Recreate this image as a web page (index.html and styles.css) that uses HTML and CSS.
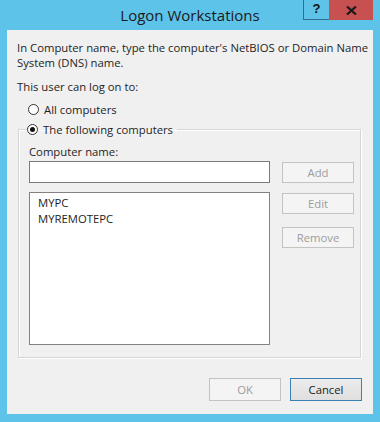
FILE: index.html
```html
<!DOCTYPE html>
<html lang="en">
<head>
    <meta charset="UTF-8">
    <title>Logon Workstations</title>
    <link rel="stylesheet" href="styles.css">
</head>
<body>
    <div class="window">
        <div class="titlebar">
            <div></div>
            <div class="title">Logon Workstations</div>
            <div class="caption-buttons">
                <span class="cap-help">?</span>
                <span class="cap-close">
                    <svg width="11" height="9" viewBox="0 0 11 9"><path d="M1 0.5 L10 8.5 M10 0.5 L1 8.5" stroke="#1a1a1a" stroke-width="2.2"/></svg>
                </span>
            </div>
        </div>
        <div class="client">
            <p class="intro">In Computer name, type the computer's NetBIOS or Domain Name<br>System (DNS) name.</p>
            <p class="label">This user can log on to:</p>
            <div class="radio-row"><span class="radio"></span>All computers</div>
            <fieldset class="group">
                <legend><span class="radio checked"></span>The following computers</legend>
                <div class="group-body">
                    <div class="fields">
                        <div class="field-label">Computer name:</div>
                        <div class="textbox"></div>
                        <div class="listbox">
                            <div>MYPC</div>
                            <div>MYREMOTEPC</div>
                        </div>
                    </div>
                    <div class="side-buttons">
                        <button class="btn disabled add">Add</button>
                        <button class="btn disabled">Edit</button>
                        <button class="btn disabled remove">Remove</button>
                    </div>
                </div>
            </fieldset>
            <div class="footer">
                <button class="btn disabled">OK</button>
                <button class="btn default">Cancel</button>
            </div>
        </div>
    </div>
</body>
</html>
```

FILE: styles.css
```css
body {
    margin: 0;
    background: #5ec3e9;
    font-family: "Open Sans", "Liberation Sans", sans-serif;
    font-size: 11.3px;
    color: #1e1e1e;
}
.window {
    width: 380px;
    height: 422px;
    overflow: hidden;
}
.titlebar {
    height: 30px;
    display: grid;
    grid-template-columns: 80px 1fr 80px;
}
.title {
    text-align: center;
    font-size: 15px;
    line-height: 30px;
    color: #1a1a1a;
}
.caption-buttons {
    display: flex;
    justify-content: flex-end;
    align-items: flex-start;
    padding-right: 7px;
}
.cap-help {
    width: 26px;
    height: 20px;
    border-left: 1px solid #2f6f8f;
    border-bottom: 1px solid #2f6f8f;
    box-sizing: border-box;
    text-align: center;
    font-family: "Liberation Sans", sans-serif;
    font-weight: bold;
    font-size: 13px;
    line-height: 18px;
    color: #111;
}
.cap-close {
    width: 44px;
    height: 20px;
    background: #c75050;
    display: flex;
    align-items: center;
    justify-content: center;
}
.client {
    margin: 0 7px;
    height: 384px;
    background: #f0f0f0;
    padding: 10px 0 0 10px;
    box-sizing: border-box;
    display: flex;
    flex-direction: column;
}
.intro {
    margin: 0;
    line-height: 15px;
    white-space: nowrap;
}
.label {
    margin: 9px 0 0 0;
    line-height: 15px;
}
.radio-row {
    margin: 8px 0 0 11px;
    display: flex;
    align-items: center;
    line-height: 15px;
}
.radio {
    width: 11px;
    height: 11px;
    border: 1px solid #333;
    border-radius: 50%;
    background: #fff;
    margin-right: 5px;
    box-sizing: border-box;
    position: relative;
}
.radio.checked::after {
    content: "";
    position: absolute;
    left: 2px;
    top: 2px;
    width: 5px;
    height: 5px;
    border-radius: 50%;
    background: #111;
}
.group {
    margin: 5px 0 0 1px;
    width: 343px;
    height: 236px;
    box-sizing: border-box;
    border: 1px solid #d5d5d5;
    box-shadow: inset 1px 1px 0 #fff, 1px 1px 0 #fff;
    padding: 0 0 0 10px;
}
.group legend {
    display: flex;
    align-items: center;
    padding: 0 4px 0 0;
    margin-left: -2px;
    line-height: 15px;
}
.group-body {
    display: flex;
    gap: 12px;
}
.field-label {
    margin-top: 7px;
    line-height: 15px;
}
.textbox {
    width: 241px;
    height: 22px;
    box-sizing: border-box;
    border: 1px solid #7a7a7a;
    background: #fff;
    margin-top: 2px;
}
.listbox {
    width: 241px;
    height: 153px;
    box-sizing: border-box;
    border: 1px solid #828282;
    background: #fff;
    margin-top: 9px;
    padding: 2px 0 0 8px;
    line-height: 16px;
}
.side-buttons {
    display: flex;
    flex-direction: column;
    padding-top: 25px;
}
.btn {
    width: 72px;
    height: 21px;
    font-family: inherit;
    font-size: 11.3px;
    padding: 0;
    box-sizing: border-box;
}
.btn.disabled {
    background: #f4f4f4;
    border: 1px solid #c3c3c3;
    color: #9c9c9c;
}
.side-buttons .btn + .btn {
    margin-top: 10px;
}
.side-buttons .btn.remove {
    margin-top: 13px;
}
.footer {
    display: flex;
    justify-content: flex-end;
    gap: 9px;
    margin-top: auto;
    padding: 0 11px 13px 0;
}
.footer .btn {
    height: 23px;
}
.btn.default {
    background: linear-gradient(#ececec, #dfdfdf);
    border: 1px solid #3c7fb1;
    color: #1a1a1a;
}
```
